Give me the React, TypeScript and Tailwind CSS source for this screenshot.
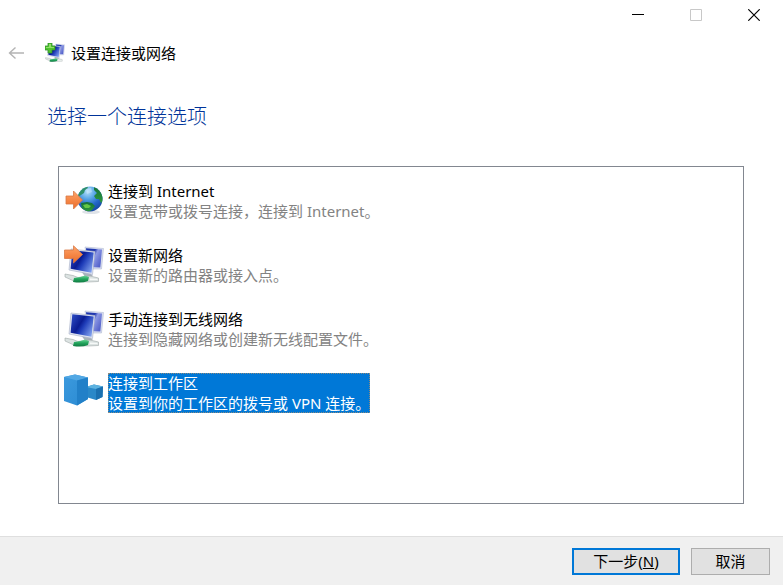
import { useState } from 'react'

const GlobeIcon = () => (
  <svg className="h-10 w-10 shrink-0" viewBox="0 0 40 40" aria-hidden="true">
    <defs>
      <radialGradient id="globe-sea" cx="0.4" cy="0.2" r="0.85">
        <stop offset="0" stopColor="#b5e0fa" />
        <stop offset="0.35" stopColor="#58a6e6" />
        <stop offset="0.65" stopColor="#2468c8" />
        <stop offset="1" stopColor="#12429c" />
      </radialGradient>
      <linearGradient id="globe-land" x1="0" y1="0" x2="0" y2="1">
        <stop offset="0" stopColor="#14703c" />
        <stop offset="1" stopColor="#2f9a3c" />
      </linearGradient>
      <linearGradient id="arrow" x1="0" y1="0" x2="0" y2="1">
        <stop offset="0" stopColor="#ffa468" />
        <stop offset="1" stopColor="#ec6c28" />
      </linearGradient>
      <clipPath id="globe-clip">
        <circle cx="26" cy="18" r="12.500" />
      </clipPath>
    </defs>
    <ellipse cx="27" cy="31" rx="9" ry="2" fill="#dfe3e8" />
    <circle cx="26" cy="18" r="12.500" fill="url(#globe-sea)" />
    <g clipPath="url(#globe-clip)">
      <path d="M14 10 L17 6 L23 5 L24 7 L21 9 L20 12 L17 14 L14 16 Z" fill="#2e8f6c" />
      <path d="M30 5 L35 7 L39 12 L39 20 L37 22 L35 18 L32 18 L30 15 L33 12 L30 9 Z" fill="url(#globe-land)" />
      <path d="M17 22 L23 21 L28 22 L31 25 L28 29 L24 31 L18 28 Z" fill="url(#globe-land)" />
      <path d="M19 24 L23 23 L27 25 L25 27 L21 27 Z" fill="#63c846" />
      <path d="M22 8 L27 7 L28 11 L23 13 Z" fill="#cdeaff" opacity="0.5" />
    </g>
    <path d="M2 15 H9.500 V10 L18.500 19 L9.500 28 V23 H2 Z" fill="url(#arrow)" stroke="#d87a48" strokeWidth="0.800" />
  </svg>
)

const MonitorArt = () => (
  <>
    <defs>
      <linearGradient id="screen" x1="0" y1="0.200" x2="1" y2="0.800">
        <stop offset="0" stopColor="#2a48c0" />
        <stop offset="0.4" stopColor="#0a1c92" />
        <stop offset="0.55" stopColor="#1e3cb8" />
        <stop offset="1" stopColor="#86a6f0" />
      </linearGradient>
      <linearGradient id="screen-back" x1="0" y1="0" x2="1" y2="0.600">
        <stop offset="0" stopColor="#1a34ac" />
        <stop offset="0.45" stopColor="#2238b0" />
        <stop offset="0.6" stopColor="#8c98e4" />
        <stop offset="1" stopColor="#5664cc" />
      </linearGradient>
      <linearGradient id="cable" x1="0" y1="0" x2="0" y2="1">
        <stop offset="0" stopColor="#6fd89a" />
        <stop offset="0.5" stopColor="#22a45c" />
        <stop offset="1" stopColor="#117a42" />
      </linearGradient>
    </defs>
    <path d="M21 2 L39.500 3.500 L37.500 24 L24 24 Z" fill="#d8ddf0" stroke="#b4bcd4" strokeWidth="0.600" />
    <path d="M22 3.200 L38 4.500 L36.300 22.500 L24 22 Z" fill="url(#screen-back)" />
    <path d="M17 26 L26 28 L29 31 L22 33 Z" fill="#a9b2bb" />
    <path d="M7 4 L31 6.500 L28.500 29.500 L5 25 Z" fill="#dfe4f2" stroke="#a6aec6" strokeWidth="0.600" />
    <path d="M8.300 5.300 L29.700 7.600 L27.500 27.800 L6.600 23.700 Z" fill="url(#screen)" />
    <path d="M1 29 L9 30.500 L14 32.500 L26 31 L34.500 33 L34.500 36.500 L24 37 L11 36.500 L1 32 Z" fill="#dce3e2" stroke="#9fa8a7" strokeWidth="0.600" />
    <path d="M10 33 Q17 32 21 30.500 L25 32 L24 36 Q18 38.500 9 37 Z" fill="url(#cable)" />
    <path d="M26 33.500 L33.500 34 L33.500 35 L26 35 Z" fill="#f6f9f8" />
  </>
)

const NetworkIcon = () => (
  <svg className="h-10 w-10 shrink-0" viewBox="0 0 40 40" aria-hidden="true">
    <MonitorArt />
  </svg>
)

const NewNetworkIcon = () => (
  <svg className="h-10 w-10 shrink-0" viewBox="0 0 40 40" aria-hidden="true">
    <MonitorArt />
    <path d="M0.500 5 H9.500 V0.800 L18.500 9.500 L9.500 18 V13.500 H0.500 Z" fill="url(#arrow)" stroke="#d87a48" strokeWidth="0.800" />
  </svg>
)

const WorkplaceIcon = () => (
  <svg className="h-10 w-10 shrink-0" viewBox="0 0 40 40" aria-hidden="true">
    <defs>
      <linearGradient id="tower" x1="0" y1="0" x2="1" y2="1">
        <stop offset="0" stopColor="#3c9ade" />
        <stop offset="1" stopColor="#2a8ad2" />
      </linearGradient>
    </defs>
    <path d="M22 14 L30 11.500 L39 13.500 L38.500 24 L32 27 L22 24 Z" fill="#2a88c8" />
    <path d="M22 14 L30 11.500 L39 13.500 L32 16 Z" fill="#5cb2e0" />
    <path d="M32 16 L39 13.500 L38.500 24 L32 27 Z" fill="#1a70b0" />
    <path d="M0 4 L11 1.500 L24 4.500 L24 26 L13 32.500 L0 28 Z" fill="url(#tower)" />
    <path d="M0 4 L11 1.500 L24 4.500 L13 7.500 Z" fill="#52a8e4" />
    <path d="M13 7.500 L24 4.500 L24 26 L13 32.500 Z" fill="#2280c8" />
  </svg>
)

const WizardIcon = () => (
  <svg className="h-5 w-5" viewBox="0 0 40 40" aria-hidden="true">
    <MonitorArt />
    <path d="M6 0 H14 V6 H20 V14 H14 V20 H6 V14 H0 V6 H6 Z" fill="#4fc22f" stroke="#2f8f28" strokeWidth="1.500" />
    <path d="M8 2 H12 V8 H18 V10 H2 V8 H8 Z" fill="#8fe068" />
  </svg>
)

const options = [
  { title: '连接到 Internet', text: '设置宽带或拨号连接，连接到 Internet。', Icon: GlobeIcon },
  { title: '设置新网络', text: '设置新的路由器或接入点。', Icon: NewNetworkIcon },
  { title: '手动连接到无线网络', text: '连接到隐藏网络或创建新无线配置文件。', Icon: NetworkIcon },
  { title: '连接到工作区', text: '设置到你的工作区的拨号或 VPN 连接。', Icon: WorkplaceIcon },
]

const WindowControls = () => (
  <div className="flex h-[30px] justify-end">
    <button type="button" aria-label="最小化" className="flex w-[59px] items-center justify-center hover:bg-gray-200">
      <svg className="h-3 w-3" viewBox="0 0 12 12" shapeRendering="crispEdges" aria-hidden="true">
        <path d="M0 5.500 H12" stroke="#000" />
      </svg>
    </button>
    <button type="button" aria-label="最大化" disabled className="flex w-[58px] items-center justify-center">
      <svg className="h-3 w-3" viewBox="0 0 12 12" aria-hidden="true">
        <path d="M0.500 0.500 H11.500 V11.500 H0.500 Z" fill="none" stroke="#c8c8c8" />
      </svg>
    </button>
    <button type="button" aria-label="关闭" className="flex w-[58px] items-center justify-center hover:bg-red-500">
      <svg className="h-3 w-3" viewBox="0 0 12 12" aria-hidden="true">
        <path d="M0.300 0.300 L11.700 11.700 M11.700 0.300 L0.300 11.700" stroke="#000" strokeWidth="1.200" />
      </svg>
    </button>
  </div>
)

export default function App() {
  const [selected, setSelected] = useState(3)

  return (
    <div className="flex min-h-screen flex-col bg-white font-['Noto_Sans','Noto_Sans_CJK_SC',sans-serif] text-[15px] leading-5 text-black">
      <WindowControls />

      {/* Encabezado del asistente */}
      <header className="flex h-[46px] items-center pl-2">
        <button type="button" aria-label="后退" disabled className="flex h-5 w-[37px] items-center">
          <svg className="h-4 w-4" viewBox="0 0 16 16" fill="none" stroke="#b4b4b4" strokeWidth="1.400" aria-hidden="true">
            <path d="M1.500 8 H16 M7.500 2.500 L1.500 8 L7.500 13.500" />
          </svg>
        </button>
        <WizardIcon />
        <span className="pl-1.5">设置连接或网络</span>
      </header>

      <main className="flex flex-1 flex-col pb-8 pl-[58px] pr-[39px] pt-[27px]">
        <h1 className="-ml-[11px] text-xl font-light leading-7 text-[#003399]">选择一个连接选项</h1>
        <ul className="mt-[35px] flex flex-1 flex-col gap-6 border border-[#828790] px-[5px] py-3.5">
          {options.map(({ title, text, Icon }, i) => {
            const active = i === selected
            return (
              <li key={title}>
                <button
                  type="button"
                  aria-pressed={active}
                  onClick={() => setSelected(i)}
                  className="flex gap-1 text-left outline-none"
                >
                  <Icon />
                  <span className={active ? 'bg-[#0078d7] text-white outline-1 -outline-offset-1 outline-dotted outline-[#8a8a80]' : ''}>
                    <span className="block">{title}</span>
                    <span className={active ? 'block' : 'block text-[#838383]'}>{text}</span>
                  </span>
                </button>
              </li>
            )
          })}
        </ul>
      </main>

      <footer className="flex justify-end gap-[11px] border-t border-[#dfdfdf] bg-[#f0f0f0] pb-2.5 pl-3 pr-[13px] pt-[11px]">
        <button type="button" className="h-[27px] w-[108px] border-2 border-[#0078d7] bg-[#e1e1e1] pb-0.5">
          下一步(<span className="underline">N</span>)
        </button>
        <button type="button" className="h-[27px] w-[79px] border border-[#adadad] bg-[#e1e1e1] pb-0.5">
          取消
        </button>
      </footer>
    </div>
  )
}
